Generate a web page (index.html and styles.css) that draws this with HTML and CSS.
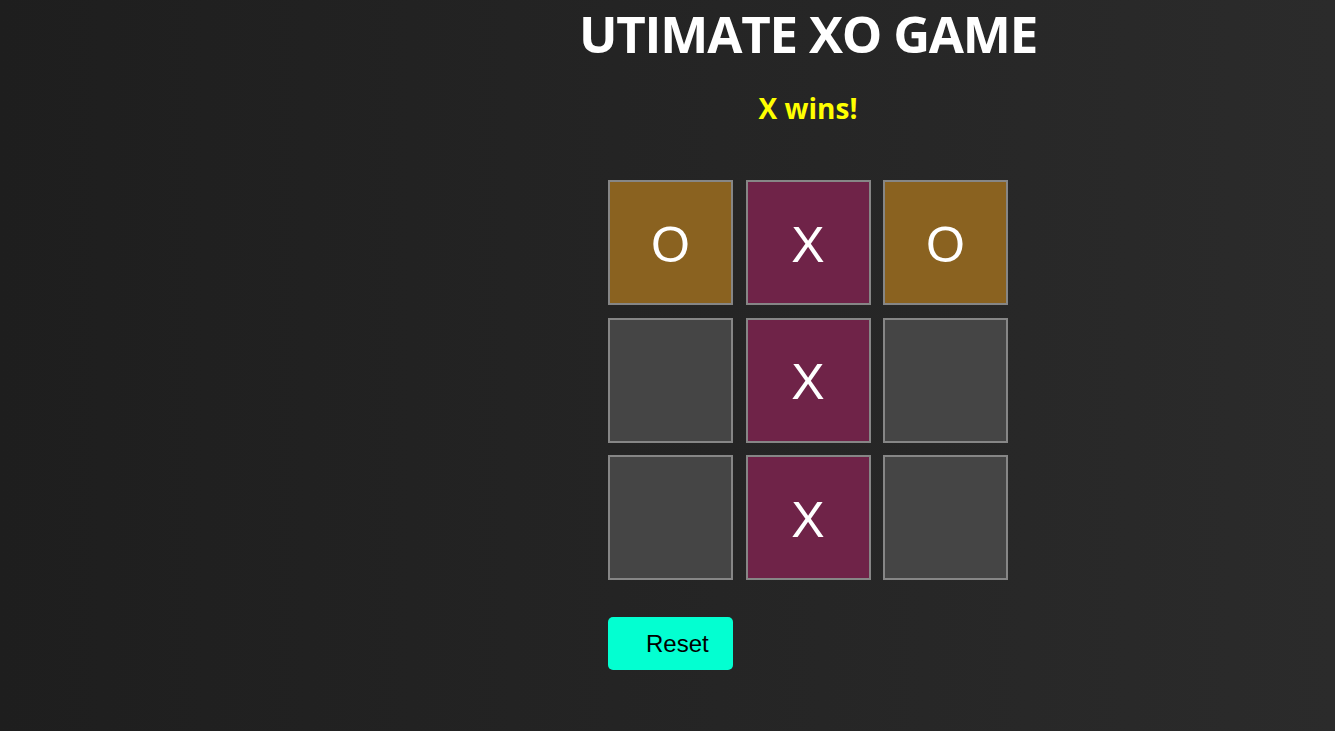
FILE: index.html
```html
<!DOCTYPE html>
<html lang="en">
<head>
<meta charset="utf-8">
<title>Utimate XO Game</title>
<link rel="stylesheet" href="styles.css">
</head>
<body>
<main class="game">
  <h1 class="title">UTIMATE XO GAME</h1>
  <h2 class="status">X wins!</h2>
  <div class="board">
    <div class="cell cell-o">O</div>
    <div class="cell cell-x">X</div>
    <div class="cell cell-o">O</div>
    <div class="cell"></div>
    <div class="cell cell-x">X</div>
    <div class="cell"></div>
    <div class="cell"></div>
    <div class="cell cell-x">X</div>
    <div class="cell"></div>
  </div>
  <div class="actions">
    <button class="reset" type="button">Reset</button>
  </div>
</main>
</body>
</html>
```

FILE: styles.css
```css
html, body {
  margin: 0;
  padding: 0;
  height: 100%;
}

body {
  background: linear-gradient(to right, #1e1e1e, #2b2b2b);
  color: #fff;
  font-family: "Open Sans", "Noto Sans", sans-serif;
}

.game {
  width: 800px;
  margin-left: 408px;
  display: flex;
  flex-direction: column;
  align-items: center;
}

.title {
  margin: 0;
  padding-top: 2px;
  font-size: 51px;
  font-weight: 700;
  line-height: 62px;
  letter-spacing: -1.2px;
  color: #fff;
  white-space: nowrap;
}

.status {
  margin: 25px 0 0;
  font-size: 28px;
  font-weight: 700;
  line-height: 38px;
  color: #ffff00;
}

.board {
  margin-top: 53px;
  display: grid;
  grid-template-columns: repeat(3, 125px);
  grid-auto-rows: 125px;
  column-gap: 12.5px;
  row-gap: 12.5px;
}

.cell {
  box-sizing: border-box;
  border: 2px solid #868686;
  background: #454545;
  display: flex;
  align-items: center;
  justify-content: center;
  font-family: "Liberation Sans", Arial, sans-serif;
  font-size: 50px;
  line-height: 1;
  padding-top: 4px;
  color: #fff;
}

.cell-o {
  background: #8a6220;
}

.cell-x {
  background: #6f2348;
}

.actions {
  width: 400px;
  margin-top: 37px;
  display: flex;
}

.reset {
  box-sizing: border-box;
  width: 125px;
  height: 53px;
  padding: 0 0 0 38px;
  border: none;
  border-radius: 5px;
  background: #03ffd1;
  color: #000;
  font-family: "Liberation Sans", Arial, sans-serif;
  font-size: 24px;
  text-align: left;
  cursor: pointer;
}
```
